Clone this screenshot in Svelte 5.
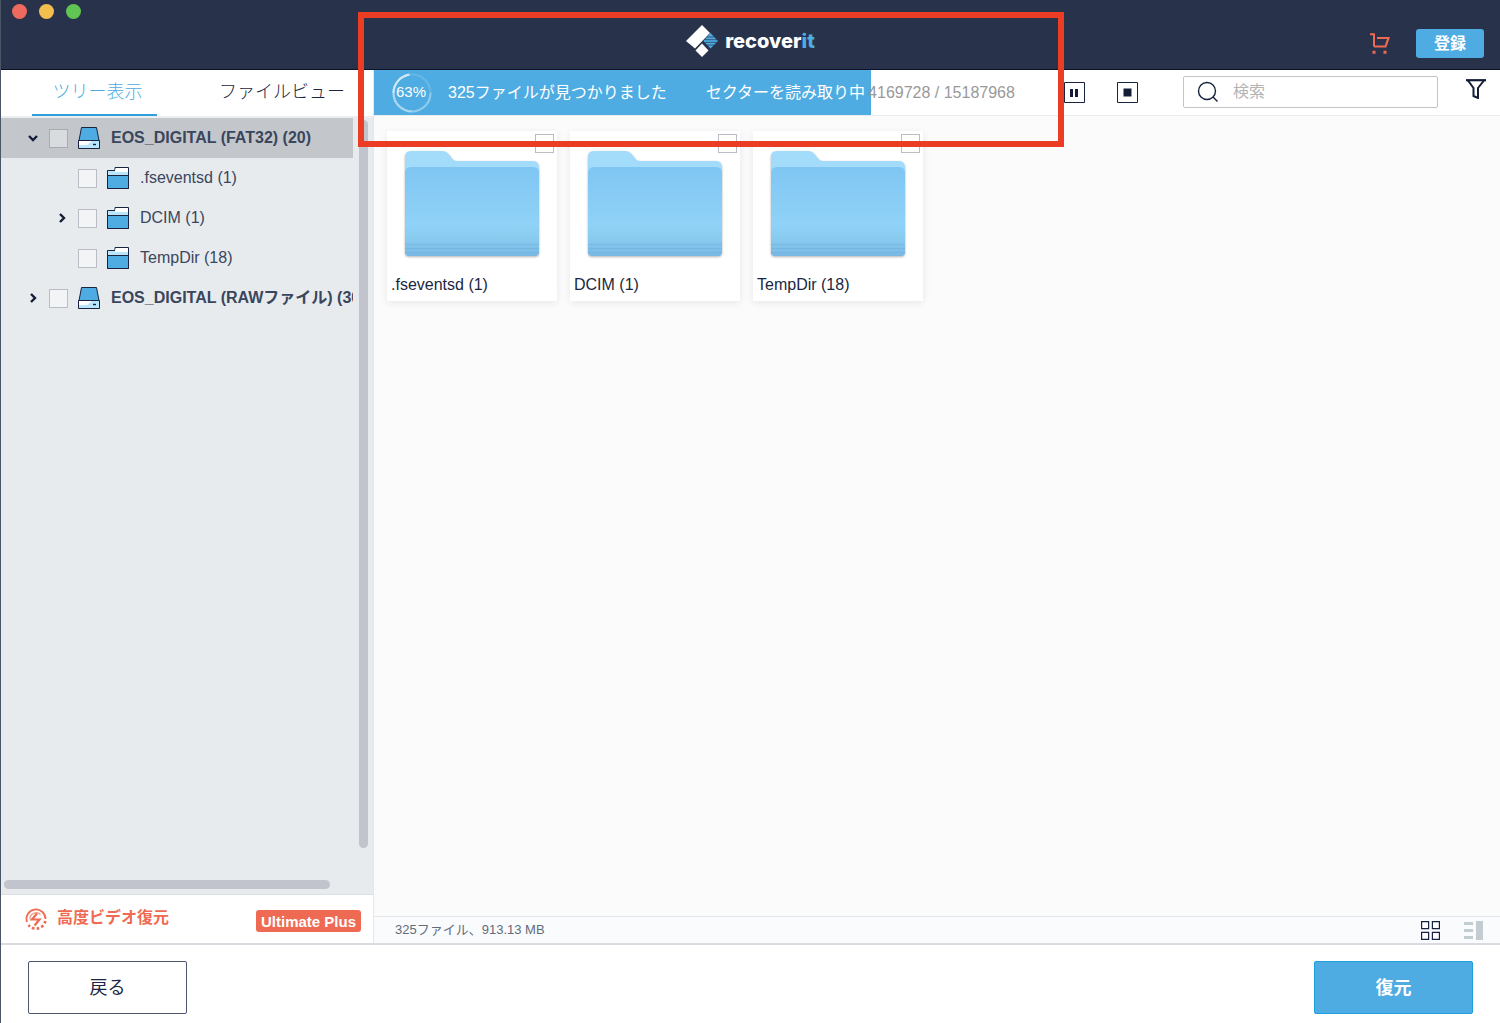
<script lang="ts">
  interface TreeNode {
    id: string;
    label: string;
    kind: 'drive' | 'folder';
    level: number;
    arrow?: 'open' | 'closed';
    selected?: boolean;
  }

  const nodes: TreeNode[] = [
    { id: 'fat32', label: 'EOS_DIGITAL (FAT32) (20)', kind: 'drive', level: 0, arrow: 'open', selected: true },
    { id: 'fsevents', label: '.fseventsd (1)', kind: 'folder', level: 1 },
    { id: 'dcim', label: 'DCIM (1)', kind: 'folder', level: 1, arrow: 'closed' },
    { id: 'temp', label: 'TempDir (18)', kind: 'folder', level: 1 },
    { id: 'raw', label: 'EOS_DIGITAL (RAWファイル) (305)', kind: 'drive', level: 0, arrow: 'closed' },
  ];

  const folders = ['.fseventsd (1)', 'DCIM (1)', 'TempDir (18)'];

  const percent = 63;
  const barFill = 73;
  let query = $state('');
</script>

<div class="window">
  <header class="titlebar">
    <div class="lights">
      <button class="light close" aria-label="閉じる"></button>
      <button class="light minimize" aria-label="最小化"></button>
      <button class="light zoom" aria-label="拡大"></button>
    </div>
    <div class="brand">
      <svg width="32" height="32" viewBox="0 0 32 32" aria-hidden="true">
        <path d="M16 0 24 8 9 23.500 0 16Z" fill="#fff" />
        <path d="M16 18.500 22.500 25.500 16 32 9.500 25.500Z" fill="#fff" />
        <path d="M24.500 8 32 16 24.500 23.500 17.500 16Z" fill="#4eace2" />
        <path d="M21 12h9M19 14.700h13M19 17.400h12M21 20.100h8" stroke="#28334b" stroke-width="0.700" />
      </svg>
      <span class="brand-name">recover<span class="brand-it">it</span></span>
    </div>
    <div class="account">
      <button class="icon-btn" aria-label="カート">
        <svg width="20" height="21" viewBox="0 0 20 21" fill="none" stroke="#ef6a52">
          <path d="M0 1.200h4v12.300" stroke-width="2" />
          <path d="M4 13.500h11.500L18.500 5H7" stroke-width="2.200" />
          <path d="M2.500 19.300h3M13.500 19.300h3" stroke-width="3" />
        </svg>
      </button>
      <button class="register">登録</button>
    </div>
  </header>

  <main class="main">
    <aside class="sidebar">
      <nav class="tabs">
        <button class="tab active">ツリー表示</button>
        <button class="tab">ファイルビュー</button>
      </nav>

      <div class="tree-area">
        <div class="tree-row">
          <ul class="tree">
            {#each nodes as node (node.id)}
              <li class="node" class:child={node.level === 1} class:selected={node.selected}>
                {#if node.arrow}
                  <button class="twisty" aria-label={node.arrow === 'open' ? '折りたたむ' : '展開'}>
                    <svg width="12" height="12" viewBox="0 0 12 12" fill="none" stroke="#131d36" stroke-width="2.4">
                      {#if node.arrow === 'open'}
                        <path d="M2 4 6 8 10 4" />
                      {:else}
                        <path d="M4 2 8 6 4 10" />
                      {/if}
                    </svg>
                  </button>
                {:else}
                  <span class="twisty"></span>
                {/if}
                <input type="checkbox" class="check" id={node.id} />
                {#if node.kind === 'drive'}
                  <svg class="node-icon" width="22" height="22" viewBox="0 0 22 22" aria-hidden="true">
                    <path d="M3.500.5h15l2.500 13H1Z" fill="#4eace2" stroke="#17233f" />
                    <path d="M.5 13.500h21v8H.5Z" fill="#b9e6fb" stroke="#17233f" />
                    <path d="M1 14h13l-5 4H1Z" fill="#fff" />
                    <path d="M15 17.500h3" stroke="#17233f" stroke-width="1.400" />
                  </svg>
                {:else}
                  <svg class="node-icon" width="22" height="22" viewBox="0 0 22 22" aria-hidden="true">
                    <path d="M.5 3.500h7.500v-3h13.500v21H.5Z" fill="#b9e6fb" stroke="#17233f" />
                    <path d="M9 1h12v4H8V3.500Z" fill="#fff" />
                    <path d="M.5 8.500h21v13H.5Z" fill="#4eace2" stroke="#17233f" />
                  </svg>
                {/if}
                <label class="node-label" class:bold={node.kind === 'drive'} for={node.id}>{node.label}</label>
              </li>
            {/each}
          </ul>
          <div class="vbar"></div>
        </div>
        <div class="hbar"></div>
      </div>

      <div class="promo">
        <svg width="22" height="22" viewBox="0 0 22 22" fill="none" stroke="#ef6a52" aria-hidden="true">
          <path d="M2 14A9.500 9.500 0 1 1 20.500 11" stroke-width="1.800" />
          <path d="M5 11.500A6.200 6.200 0 0 1 15.500 6.500" stroke-width="1.200" opacity="0.700" />
          <path d="M20.300 13A9.500 9.500 0 0 1 3.500 17" stroke-width="2.600" stroke-dasharray="2.600 2.200" />
          <path d="M12 5.500 7 11.500h7.500L9.500 17.500" stroke-width="2.200" />
        </svg>
        <a class="promo-link" href="#video">高度ビデオ復元</a>
        <span class="badge">Ultimate Plus</span>
      </div>
    </aside>

    <section class="content">
      <div class="toolbar">
        <div class="scan" role="progressbar" aria-label="スキャン" aria-valuenow={percent} aria-valuemin="0" aria-valuemax="100">
          <div class="scan-fill" style="width: {barFill}%"></div>
          <div class="scan-info">
            <div class="ring">
              <svg width="40" height="40" viewBox="0 0 40 40" fill="none" stroke="#fff" stroke-width="2.200">
                <circle cx="20" cy="20" r="18.500" opacity="0.150" />
                <path d="M38.500 20A18.500 18.500 0 0 1 20 38.500" opacity="0.250" />
                <path d="M20 38.500A18.500 18.500 0 0 1 1.500 20" opacity="0.450" />
                <path d="M1.500 20A18.500 18.500 0 0 1 17.500 1.700" opacity="0.700" />
              </svg>
              <span class="ring-text">{percent}%</span>
            </div>
            <span class="found">325ファイルが見つかりました</span>
            <span class="reading">セクターを読み取り中</span>
            <span class="sectors">4169728 / 15187968</span>
          </div>
        </div>
        <button class="icon-btn" aria-label="一時停止">
          <svg width="21" height="21" viewBox="0 0 21 21">
            <path d="M.5.5h20v20H.5Z" fill="#fff" stroke="#17233f" />
            <path d="M6 7h3v8H6ZM11 7h3v8h-3Z" fill="#131d36" />
          </svg>
        </button>
        <button class="icon-btn stop" aria-label="停止">
          <svg width="21" height="21" viewBox="0 0 21 21">
            <path d="M.5.5h20v20H.5Z" fill="#fff" stroke="#17233f" />
            <path d="M6.500 6.500h8v8h-8Z" fill="#131d36" />
          </svg>
        </button>
        <label class="search">
          <svg width="22" height="22" viewBox="0 0 22 22" fill="none" stroke="#17233f" stroke-width="1.400" aria-hidden="true">
            <circle cx="10" cy="10" r="8.500" />
            <path d="m16 16 4.500 4.500" />
          </svg>
          <input type="text" placeholder="検索" aria-label="検索" bind:value={query} />
        </label>
        <button class="icon-btn filter" aria-label="フィルター">
          <svg width="20" height="20" viewBox="0 0 20 20" fill="none" stroke="#131d36" stroke-width="2">
            <path d="M0 1.200h20" stroke-width="2.200" />
            <path d="M2 1.500 7.500 9v8l4.500 2V9L18 1.500" />
          </svg>
        </button>
      </div>

      <div class="tiles">
        {#each folders as name, i (name)}
          <div class="tile">
            <input type="checkbox" class="check tile-check" id="tile-{i}" />
            <svg class="folder" width="134" height="106" viewBox="0 0 134 106" aria-hidden="true">
              <defs>
                <linearGradient id="front-{i}" x1="0" y1="0" x2="0" y2="1">
                  <stop offset="0" stop-color="#7fc6f3" />
                  <stop offset="0.65" stop-color="#90d2f7" />
                  <stop offset="0.8" stop-color="#8acbf0" />
                  <stop offset="1" stop-color="#78b8e4" />
                </linearGradient>
              </defs>
              <path d="M0 6Q0 0 6 0H37Q41 0 43.500 3L48 8.500Q49.500 10 53 10H128Q134 10 134 17V60H0Z" fill="#a3dbfb" />
              <path d="M0 22Q0 16 6 16H128Q134 16 134 22V101Q134 105 130 105H4Q0 105 0 101Z" fill="url(#front-{i})" />
              <path d="M0 93.500H134M0 97.500H134M0 101.500H134" stroke="#6fb2df" stroke-width="1" opacity="0.600" />
            </svg>
            <label class="tile-name" for="tile-{i}">{name}</label>
          </div>
        {/each}
      </div>

      <div class="status">
        <span class="status-text">325ファイル、913.13 MB</span>
        <button class="icon-btn" aria-label="グリッド表示">
          <svg width="19" height="19" viewBox="0 0 19 19" fill="#fff" stroke="#17233f" stroke-width="1.200">
            <path d="M.6.6h7v7h-7ZM11.400.6h7v7h-7ZM.6 11.400h7v7h-7ZM11.400 11.400h7v7h-7Z" />
          </svg>
        </button>
        <button class="icon-btn" aria-label="詳細表示">
          <svg width="19" height="19" viewBox="0 0 19 19" fill="#c3cdd1">
            <path d="M0 1h9v3H0ZM0 8h9v3H0ZM0 15h9v3H0ZM12 0h7v19h-7Z" />
          </svg>
        </button>
      </div>
    </section>
  </main>

  <footer class="footer">
    <button class="action">戻る</button>
    <button class="action primary">復元</button>
  </footer>

  <div class="highlight"></div>
</div>

<style>
  :global(body) {
    margin: 0;
  }

  .window {
    position: relative;
    display: flex;
    flex-direction: column;
    box-sizing: border-box;
    min-height: 100vh;
    border-left: 1px solid #4b5568;
    background: #fff;
    color: #1b2742;
    font-family: 'Liberation Sans', 'Noto Sans CJK JP', sans-serif;
    font-size: 16px;
    line-height: 20px;
  }

  button {
    padding: 0;
    border: 0;
    background: none;
    color: inherit;
    font: inherit;
    cursor: pointer;
  }

  svg {
    display: block;
  }

  .icon-btn {
    display: flex;
    flex: none;
  }

  .titlebar {
    display: grid;
    grid-template-columns: 1fr auto 1fr;
    height: 69px;
    border-bottom: 1px solid #0b1226;
    background: #28334b;
  }

  .lights {
    display: flex;
    gap: 12px;
    padding: 4px 0 0 11px;
  }

  .light {
    width: 15px;
    height: 15px;
    border-radius: 50%;
  }

  .close {
    background: #ee6a5f;
  }

  .minimize {
    background: #f5bf4f;
  }

  .zoom {
    background: #61c554;
  }

  .brand {
    display: flex;
    align-items: center;
    gap: 7px;
    padding-top: 12px;
  }

  .brand-name {
    color: #fff;
    font-family: Inter, sans-serif;
    font-size: 20px;
    font-weight: 800;
  }

  .brand-it {
    color: #4eace2;
  }

  .account {
    display: flex;
    align-items: center;
    justify-content: flex-end;
    gap: 26px;
    padding: 18px 16px 0 0;
  }

  .register {
    width: 68px;
    height: 29px;
    border-radius: 3px;
    background: #4eace2;
    color: #fff;
    font-weight: 700;
  }

  .main {
    display: flex;
    flex: 1;
  }

  .sidebar {
    display: flex;
    flex: none;
    flex-direction: column;
    width: 372px;
    border-right: 1px solid #e3e6ea;
  }

  .tabs {
    display: flex;
    gap: 48px;
    height: 46px;
    padding-left: 31px;
    border-bottom: 2px solid #eceef0;
  }

  .tab {
    box-sizing: border-box;
    width: 125px;
    border-bottom: 2px solid transparent;
    padding-left: 6px;
    font-size: 18px;
    font-weight: 300;
    white-space: nowrap;
  }

  .tab:last-child {
    width: auto;
    padding: 0 0 0 14px;
  }

  .tab.active {
    border-color: #329fdd;
    color: #4eace2;
  }

  .tree-area {
    display: flex;
    flex: 1;
    flex-direction: column;
    padding-bottom: 5px;
    border-bottom: 1px solid #dcdfe4;
    background: #e7ebee;
  }

  .tree-row {
    display: flex;
    flex: 1;
    gap: 6px;
    padding-right: 5px;
  }

  .tree {
    flex: 1;
    min-width: 0;
    margin: 0;
    padding: 0;
    list-style: none;
  }

  .node {
    display: flex;
    align-items: center;
    gap: 10px;
    height: 40px;
    padding-left: 26px;
  }

  .node.child {
    padding-left: 55px;
  }

  .node.selected {
    background: #c3c7cc;
  }

  .twisty {
    flex: none;
    width: 12px;
    height: 12px;
  }

  .check {
    appearance: none;
    box-sizing: border-box;
    flex: none;
    width: 19px;
    height: 19px;
    margin: 0;
    border: 1px solid #b9bdc6;
    background: #f2f4f5;
  }

  .selected .check {
    border-color: #a8abb0;
    background: #d9dcde;
  }

  .node-icon {
    flex: none;
  }

  .node-label {
    overflow: hidden;
    padding-left: 1px;
    color: #3a465c;
    white-space: nowrap;
  }

  .bold {
    font-weight: 700;
  }

  .vbar {
    flex: none;
    width: 9px;
    margin: 2px 0 32px;
    border-radius: 5px;
    background: #c1c4cc;
  }

  .hbar {
    width: 326px;
    height: 9px;
    margin-left: 3px;
    border-radius: 5px;
    background: #c1c4cc;
  }

  .promo {
    display: flex;
    align-items: center;
    height: 48px;
    padding: 0 12px 0 24px;
    background: #fff;
  }

  .promo-link {
    margin-left: 10px;
    padding-bottom: 2px;
    color: #ef6a52;
    font-weight: 700;
    text-decoration: none;
  }

  .badge {
    margin: 3px 0 0 auto;
    padding: 2px 5px 0;
    border-radius: 3px;
    background: #ef6a52;
    color: #fff;
    font-size: 15px;
    font-weight: 700;
  }

  .content {
    display: flex;
    flex: 1;
    flex-direction: column;
    min-width: 0;
    background: #fbfbfb;
  }

  .toolbar {
    display: flex;
    align-items: center;
    height: 45px;
    padding-right: 14px;
    border-bottom: 1px solid #e9ebed;
    background: #fff;
  }

  .scan {
    display: grid;
    flex: 1;
    align-self: stretch;
    min-width: 0;
    margin-right: 9px;
  }

  .scan-fill,
  .scan-info {
    grid-area: 1 / 1;
  }

  .scan-fill {
    background: #4eace2;
  }

  .scan-info {
    display: flex;
    align-items: center;
    padding-left: 18px;
    color: #fff;
    white-space: nowrap;
  }

  .ring {
    display: grid;
    place-items: center;
  }

  .ring > * {
    grid-area: 1 / 1;
  }

  .ring-text {
    padding: 0 2px 2px 0;
    font-size: 15px;
  }

  .found {
    margin-left: 16px;
  }

  .reading {
    margin-left: 39px;
  }

  .sectors {
    margin-left: 3px;
    color: #999;
  }

  .stop {
    margin-left: 32px;
  }

  .search {
    display: flex;
    align-items: center;
    gap: 14px;
    box-sizing: border-box;
    width: 255px;
    height: 32px;
    margin: 0 0 2px 45px;
    padding: 0 12px 0 13px;
    border: 1px solid #c4c4c4;
    border-radius: 2px;
  }

  .search input {
    flex: 1;
    min-width: 0;
    padding: 0;
    border: 0;
    outline: 0;
    background: none;
    color: inherit;
    font: inherit;
  }

  .search input::placeholder {
    color: #b4b4b4;
  }

  .filter {
    margin: 0 0 8px 28px;
  }

  .tiles {
    display: flex;
    flex: 1;
    flex-wrap: wrap;
    align-content: flex-start;
    gap: 13px;
    padding: 15px 13px;
  }

  .tile {
    position: relative;
    display: flex;
    flex-direction: column;
    width: 170px;
    height: 170px;
    background: #fff;
    box-shadow: 0 2px 8px rgba(0, 0, 0, 0.08);
  }

  .tile-check {
    position: absolute;
    top: 3px;
    right: 3px;
    background: transparent;
  }

  .folder {
    margin: 20px 18px 0;
    filter: drop-shadow(0 1px 1px rgba(0, 0, 0, 0.3));
  }

  .tile-name {
    margin: 18px 4px 0;
  }

  .status {
    display: flex;
    align-items: center;
    gap: 24px;
    height: 26px;
    padding: 0 17px 0 21px;
    border-top: 1px solid #e3e6ea;
    background: #fafbfd;
  }

  .status-text {
    flex: 1;
    color: #626b7b;
    font-size: 13px;
  }

  .footer {
    display: flex;
    justify-content: space-between;
    padding: 16px 27px 9px;
    border-top: 2px solid #d9dbe0;
  }

  .action {
    box-sizing: border-box;
    width: 159px;
    height: 53px;
    border: 1px solid #4d5870;
    border-radius: 2px;
    font-size: 18px;
  }

  .primary {
    border-color: #1f9fdf;
    background: #4eace2;
    color: #fff;
    font-weight: 700;
  }

  /* red frame drawn over the scan progress area */
  .highlight {
    position: absolute;
    top: 12px;
    left: 357px;
    box-sizing: border-box;
    width: 706px;
    height: 135px;
    border: 6px solid #eb3d24;
    pointer-events: none;
  }
</style>
